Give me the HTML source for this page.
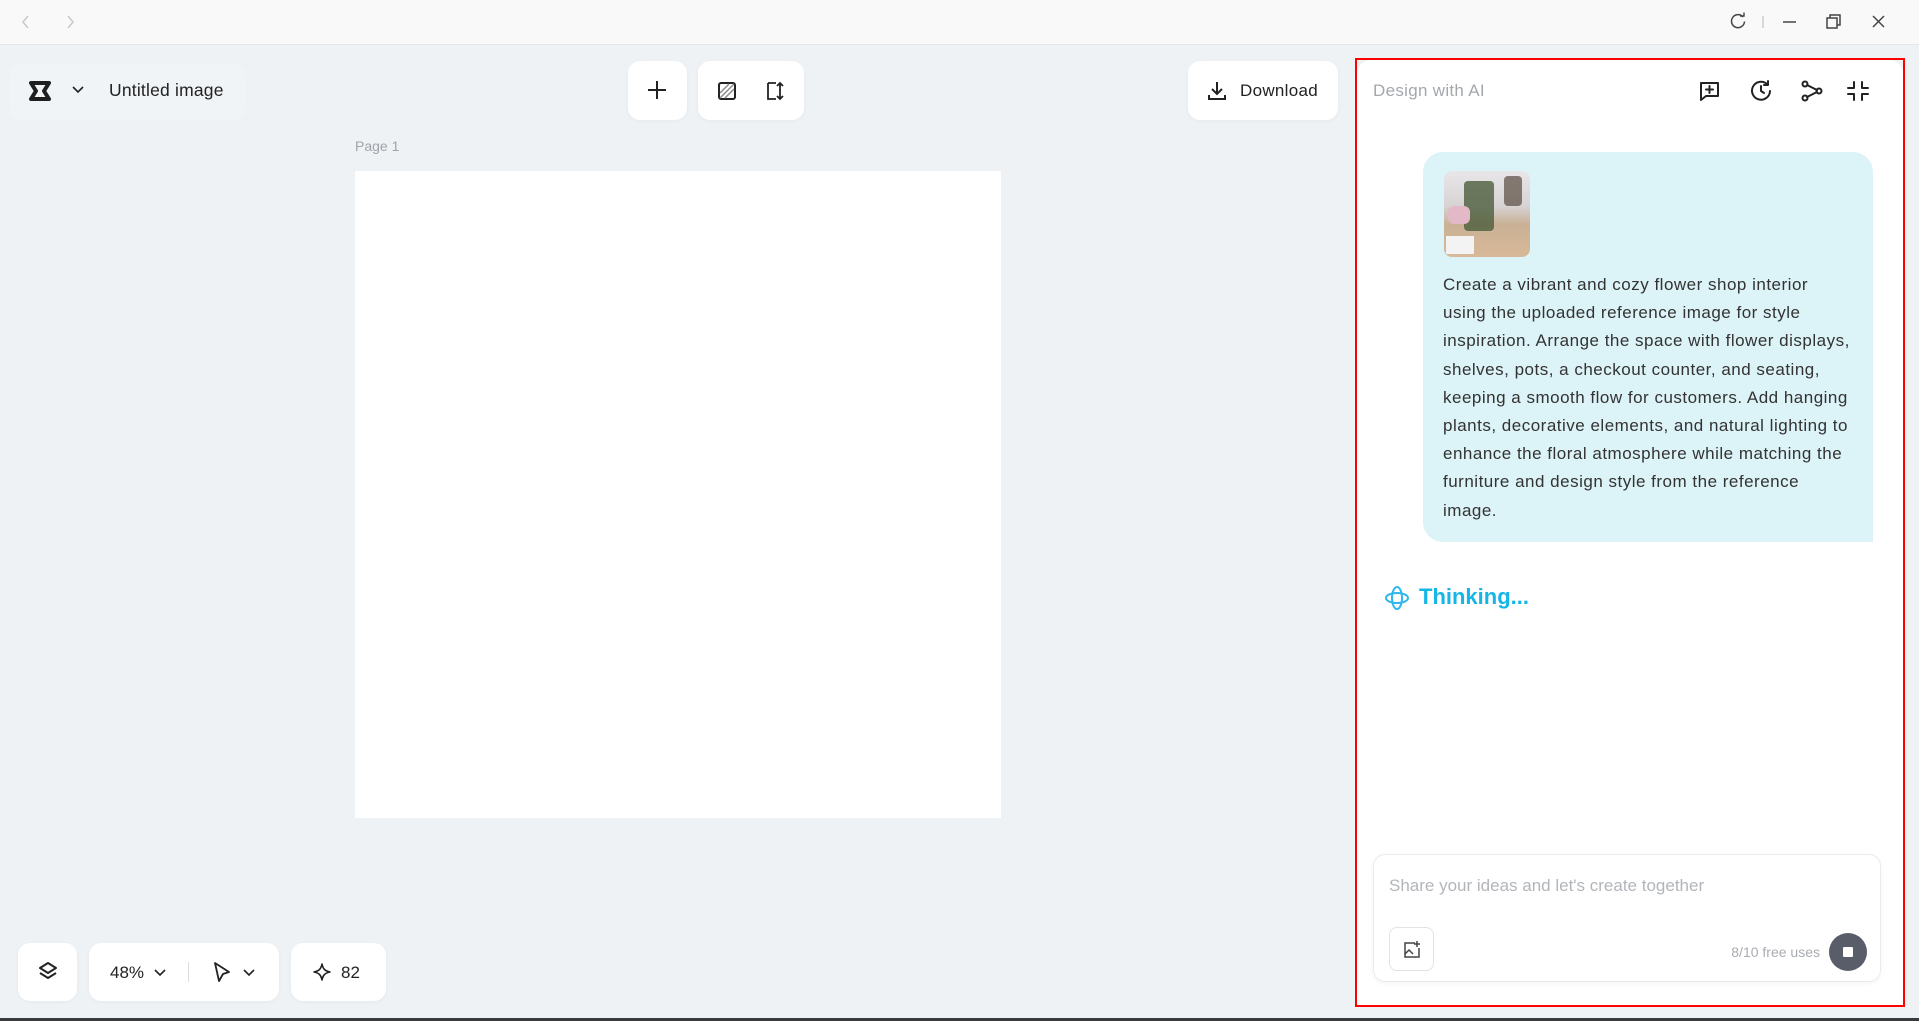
<!DOCTYPE html>
<html><head><meta charset="utf-8"><style>
*{box-sizing:border-box;margin:0;padding:0}
body{width:1919px;height:1021px;overflow:hidden;background:#eef2f5;font-family:"Liberation Sans",sans-serif;position:relative;color:#1f1f1f}
.abs{position:absolute}
.card{position:absolute;background:#fff;border-radius:12px;box-shadow:0 1px 4px rgba(0,0,0,.04)}
svg{display:block}
</style></head><body>
<div class="abs" style="left:0;top:0;width:1919px;height:45px;background:#f9f9f9;border-bottom:1px solid #e6e6e6"></div>
<svg class="abs" style="left:18px;top:14px" width="60" height="16" fill="none" stroke="#c8c8c8" stroke-width="1.5"><path d="M10 2 5 8l5 6"/><path d="M50 2l5 6-5 6"/></svg>
<svg class="abs" style="left:1727px;top:12px" width="170" height="20" fill="none" stroke="#444" stroke-width="1.5">
<path d="M16 5a6.5 6.5 0 1 0 1.5 4.5"/><path d="M13 4h4V0.5" stroke-width="1.4"/>
<path d="M36 4v12" stroke="#ccc"/>
<path d="M56 10h13"/>
<rect x="100" y="6" width="10" height="10"/><path d="M103 6V3h10v10h-3"/>
<path d="M146 4l11 11M157 4l-11 11"/></svg>
<div class="abs" style="left:10px;top:64px;width:235px;height:56px;background:#f1f4f7;border-radius:12px"></div>
<svg class="abs" style="left:29px;top:81px" width="24" height="20"><path d="M2 2h18l-5 8 5 8H2l5-8z" fill="none" stroke="#1f1f1f" stroke-width="4" stroke-linejoin="round"/></svg>
<svg class="abs" style="left:72px;top:86px" width="12" height="8" fill="none" stroke="#222" stroke-width="1.6"><path d="M1 1l5 5 5-5"/></svg>
<div class="abs" style="left:109px;top:80px;font-size:17.5px;color:#222;letter-spacing:0.2px">Untitled image</div>
<div class="card" style="left:628px;top:61px;width:59px;height:59px"></div>
<svg class="abs" style="left:647px;top:80px" width="20" height="20" stroke="#222" stroke-width="2"><path d="M10 1v18M1 10h18"/></svg>
<div class="card" style="left:698px;top:61px;width:106px;height:59px"></div>
<svg class="abs" style="left:717px;top:81px" width="20" height="20" fill="none" stroke="#222" stroke-width="2"><rect x="2" y="2" width="16" height="16" rx="2"/><path d="M3 12l9-9M3 17L17 3M8 17l9-9" stroke="#888" stroke-width="1.4"/></svg>
<svg class="abs" style="left:763px;top:80px" width="22" height="22" fill="none" stroke="#222" stroke-width="1.8"><path d="M5 3v16h8M5 3h8M17 3v16M14 6l3-3 3 3M14 16l3 3 3-3"/></svg>
<div class="card" style="left:1188px;top:61px;width:150px;height:59px"></div>
<svg class="abs" style="left:1207px;top:81px" width="20" height="20" fill="none" stroke="#222" stroke-width="2"><path d="M10 1v12M5 8l5 5 5-5M2 14v4h16v-4"/></svg>
<div class="abs" style="left:1240px;top:81px;font-size:17px;color:#222;letter-spacing:0.3px">Download</div>
<div class="abs" style="left:355px;top:138px;font-size:14px;color:#a0a4aa">Page 1</div>
<div class="abs" style="left:355px;top:171px;width:646px;height:647px;background:#fff"></div>
<div class="card" style="left:18px;top:943px;width:59px;height:58px"></div>
<svg class="abs" style="left:37px;top:961px" width="22" height="22" fill="none" stroke="#222" stroke-width="2" stroke-linejoin="round"><path d="M11 2l8 5-8 5-8-5z"/><path d="M3 12l8 5 8-5"/></svg>
<div class="card" style="left:89px;top:943px;width:190px;height:58px"></div>
<div class="abs" style="left:110px;top:963px;font-size:17px;color:#222">48%</div>
<svg class="abs" style="left:154px;top:969px" width="12" height="8" fill="none" stroke="#222" stroke-width="1.6"><path d="M1 1l5 5 5-5"/></svg>
<div class="abs" style="left:188px;top:962px;width:1px;height:20px;background:#ddd"></div>
<svg class="abs" style="left:212px;top:961px" width="20" height="22" fill="none" stroke="#222" stroke-width="1.8" stroke-linejoin="round"><path d="M3 2l14 9-6 2-4 7z"/></svg>
<svg class="abs" style="left:243px;top:969px" width="12" height="8" fill="none" stroke="#222" stroke-width="1.6"><path d="M1 1l5 5 5-5"/></svg>
<div class="card" style="left:291px;top:943px;width:95px;height:58px"></div>
<svg class="abs" style="left:313px;top:963px" width="18" height="18" fill="none" stroke="#222" stroke-width="1.6" stroke-linejoin="round"><path d="M9 1c1 5 3 7 8 8-5 1-7 3-8 8-1-5-3-7-8-8 5-1 7-3 8-8z"/></svg>
<div class="abs" style="left:341px;top:963px;font-size:17px;color:#222">82</div>
<div class="abs" style="left:1355px;top:58px;width:550px;height:949px;border:2px solid #f00;background:#eef2f5"></div>
<div class="abs" style="left:1357px;top:60px;width:546px;height:945px;background:#fff;border-radius:14px 14px 0 0"></div>
<div class="abs" style="left:1373px;top:81px;font-size:17px;color:#a3a8ae;letter-spacing:0.3px">Design with AI</div>
<svg class="abs" style="left:1698px;top:79px" width="190" height="24" fill="none" stroke="#222" stroke-width="2" stroke-linecap="round" stroke-linejoin="round">
<path d="M3 4h17v13H8l-5 4z"/><path d="M11.5 7v7M8 10.5h7"/>
<path d="M72 12a9 9 0 1 1-3-7"/><path d="M70 2v4h-4"/><path d="M63 7v5l3 2"/>
<circle cx="107" cy="5" r="2.5"/><circle cx="107" cy="19" r="2.5"/><circle cx="121" cy="12" r="2.5"/><path d="M109 6l10 5M109 18l10-5"/>
<path d="M156 3v6h-6M164 3v6h6M156 21v-6h-6M164 21v-6h6"/></svg>
<div class="abs" style="left:1423px;top:152px;width:450px;height:390px;background:#dcf3f7;border-radius:20px 20px 0 20px"></div>
<div class="abs" style="left:1444px;top:171px;width:86px;height:86px;border-radius:8px;overflow:hidden;background:linear-gradient(180deg,#e8e6e8 0%,#d8d4d6 40%,#c9b195 62%,#d8b998 100%)">
<div class="abs" style="left:20px;top:10px;width:30px;height:50px;background:#4c5e3c;opacity:.8;border-radius:4px"></div>
<div class="abs" style="left:60px;top:5px;width:18px;height:30px;background:#5a4b40;opacity:.7;border-radius:4px"></div>
<div class="abs" style="left:4px;top:35px;width:22px;height:18px;background:#e3b9c8;border-radius:6px"></div>
<div class="abs" style="left:2px;top:65px;width:28px;height:18px;background:#f3f3f3"></div>
</div>
<div class="abs" style="left:1443px;top:271px;white-space:nowrap;font-size:17px;line-height:28.2px;color:#333;letter-spacing:0.5px">Create a vibrant and cozy flower shop interior<br>using the uploaded reference image for style<br>inspiration. Arrange the space with flower displays,<br>shelves, pots, a checkout counter, and seating,<br>keeping a smooth flow for customers. Add hanging<br>plants, decorative elements, and natural lighting to<br>enhance the floral atmosphere while matching the<br>furniture and design style from the reference<br>image.</div>
<svg class="abs" style="left:1384px;top:585px" width="26" height="26" fill="none" stroke="#2fb8ee" stroke-width="2"><ellipse cx="13" cy="13" rx="11" ry="5"/><ellipse cx="13" cy="13" rx="5" ry="11"/></svg>
<div class="abs" style="left:1419px;top:584px;font-size:22px;font-weight:bold;color:#14b6e6">Thinking...</div>
<div class="abs" style="left:1373px;top:854px;width:508px;height:128px;border:1px solid #eaeaea;border-radius:12px;box-shadow:0 2px 6px rgba(0,0,0,.04)"></div>
<div class="abs" style="left:1389px;top:876px;font-size:17px;color:#b2b6bb">Share your ideas and let's create together</div>
<div class="abs" style="left:1389px;top:927px;width:45px;height:44px;border:1px solid #e3e3e3;border-radius:8px"></div>
<svg class="abs" style="left:1402px;top:940px" width="20" height="20" fill="none" stroke="#444" stroke-width="1.5"><path d="M13 3H3v14h14V8"/><path d="M3 14l4-4 4 4"/><path d="M15 1v6M12 4h6"/></svg>
<div class="abs" style="left:1722px;top:944px;width:98px;text-align:right;font-size:14px;color:#a8acb1">8/10 free uses</div>
<div class="abs" style="left:1829px;top:933px;width:38px;height:38px;border-radius:50%;background:#585d69"></div>
<div class="abs" style="left:1843px;top:947px;width:10px;height:10px;border-radius:1px;background:#fff"></div>
<div class="abs" style="left:0;top:1018px;width:1919px;height:3px;background:#3a3a3a"></div>
</body></html>
